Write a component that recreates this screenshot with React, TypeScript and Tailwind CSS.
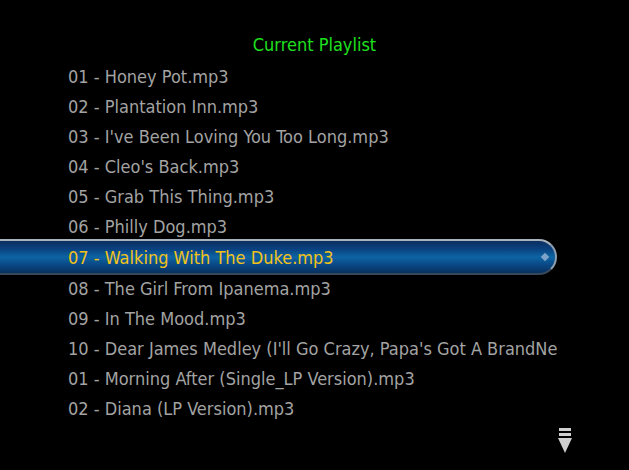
const tracks = [
  "01 - Honey Pot.mp3",
  "02 - Plantation Inn.mp3",
  "03 - I've Been Loving You Too Long.mp3",
  "04 - Cleo's Back.mp3",
  "05 - Grab This Thing.mp3",
  "06 - Philly Dog.mp3",
  "07 - Walking With The Duke.mp3",
  "08 - The Girl From Ipanema.mp3",
  "09 - In The Mood.mp3",
  "10 - Dear James Medley (I'll Go Crazy, Papa's Got A BrandNew Bag).mp3",
  "01 - Morning After (Single_LP Version).mp3",
  "02 - Diana (LP Version).mp3",
];

const selected = 6;

export default function App() {
  return (
    <div
      className="w-[629px] h-[470px] bg-black flex flex-col overflow-hidden"
      style={{ fontFamily: '"Liberation Sans Narrow", "DejaVu Sans Condensed", "Liberation Sans", sans-serif' }}
    >
      <div className="h-[61px] pt-[33px] text-center text-[18px] leading-[24px] text-[#1ee01e]">
        Current Playlist
      </div>
      <div className="flex flex-col w-[557px]">
        {tracks.map((t, i) =>
          i === selected ? (
            <div
              key={i}
              className="relative h-[30px] -my-[2px] box-content py-[3px] flex items-center"
            >
              <div className="absolute inset-0 rounded-r-[19px] border-t-2 border-r-2 border-b-2 border-t-[#a9b3bd] border-r-[#8e9fb2] border-b-[#37475a] bg-[linear-gradient(to_bottom,#0b2f60_0%,#0a4180_25%,#0d64a4_50%,#0a4784_75%,#08305f_100%)]" />
              <span className="relative pl-[68px] text-[18px] text-[#f2c21b] whitespace-nowrap">{t}</span>
              <span className="absolute right-[9px] top-1/2 -translate-y-1/2 w-[6px] h-[6px] rotate-45 bg-[#7fa3c8]" />
            </div>
          ) : (
            <div
              key={i}
              className="h-[30px] flex items-center pl-[68px] text-[18px] text-[#a3a3a3] whitespace-nowrap overflow-hidden"
            >
              {t}
            </div>
          )
        )}
      </div>
      <div className="flex justify-end pr-[57px] pt-[5px]">
        <svg width="14" height="26" viewBox="0 0 14 26">
          <rect x="1" y="0" width="12" height="3" fill="#cfcfcf" />
          <rect x="1" y="5" width="12" height="3" fill="#cfcfcf" />
          <polygon points="0,10 14,10 7,25" fill="#cfcfcf" />
        </svg>
      </div>
    </div>
  );
}
